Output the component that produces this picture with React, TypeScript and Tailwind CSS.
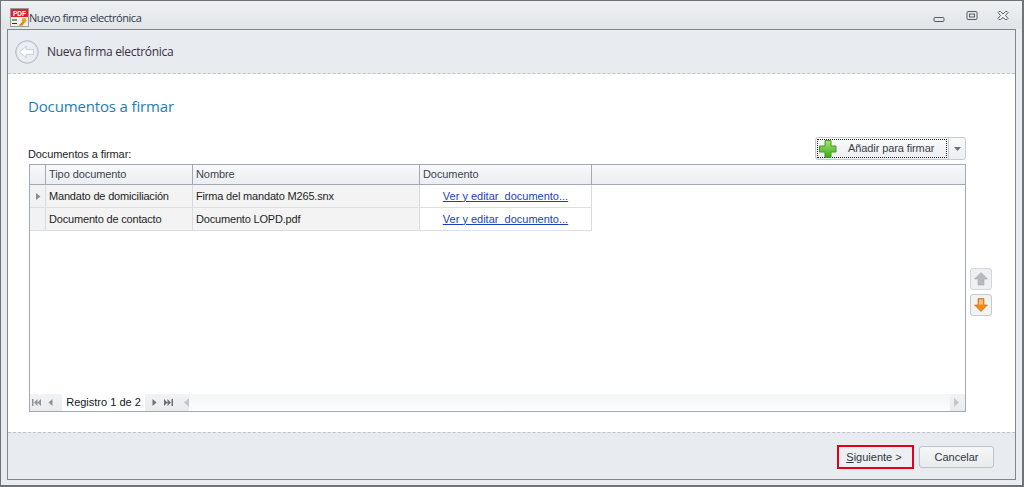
import React from "react";

const body = "font-['Liberation_Sans','Noto_Sans',sans-serif]";

function Cell({ w, children, className = "" }: { w: string; children?: React.ReactNode; className?: string }) {
  return <div className={`${w} shrink-0 h-full border-r border-[#d9dbdf] flex items-center truncate ${className}`}>{children}</div>;
}

function Row({ first, tipo, nombre }: { first?: boolean; tipo: string; nombre: string }) {
  return (
    <div className="flex h-[23px] w-[562px] border-b border-[#dcdee2] text-[11px] text-[#1e1e1e] tracking-[-0.18px]">
      <Cell w="w-[16px]" className="bg-[#f1f2f4] justify-center border-[#c4c7cd]">
        {first && <svg width="5" height="7" viewBox="0 0 5 7" className="ml-[1px]"><path d="M0 0l4.5 3.5L0 7z" fill="#8a8f96" /></svg>}
      </Cell>
      <Cell w="w-[147px]" className="bg-[#f3f3f4] pl-[3px]">{tipo}</Cell>
      <Cell w="w-[227px]" className="bg-[#f3f3f4] pl-[3px]">{nombre}</Cell>
      <Cell w="w-[172px]" className="bg-white justify-center">
        <span className="text-[#1b3fb8] underline tracking-normal">Ver y editar&nbsp; documento...</span>
      </Cell>
    </div>
  );
}

function HeadCell({ w, children }: { w: string; children?: React.ReactNode }) {
  return <div className={`${w} shrink-0 h-full border-r border-[#a3a9b5] flex items-center pl-[3px]`}>{children}</div>;
}

function NavIcon({ d, color = "#8e939a" }: { d: string; color?: string }) {
  return <svg width="9" height="9" viewBox="0 0 9 9"><path d={d} fill={color} /></svg>;
}

export default function App() {
  return (
    <div className={`w-[1024px] h-[487px] overflow-hidden flex flex-col border-[1px] border-[#6f7479] border-b-[2px] border-r-[2px] bg-[#e9ecf0] ${body}`}>
      {/* title bar */}
      <div className="h-[28px] shrink-0 flex items-center bg-gradient-to-b from-[#eef0f2] to-[#e2e5e8] pl-[9px] pr-[13px] pt-[6px]">
        <svg width="20" height="20" viewBox="0 0 20 20" className="shrink-0 mt-[-1px]">
          <rect x="0.5" y="0.5" width="18" height="18" fill="#f4f1ea" stroke="#9a9a9a" />
          <rect x="1" y="1" width="17" height="8" fill="#d6262b" />
          <text x="9.500" y="7.600" textAnchor="middle" fontSize="6.500" fontWeight="700" fill="#ffffff" fontFamily="Liberation Sans, sans-serif">PDF</text>
          <rect x="2" y="11.5" width="5" height="1" fill="#333" /><rect x="2" y="15" width="5" height="1" fill="#333" />
          <circle cx="14" cy="12.5" r="2.4" fill="#e6a41d" /><path d="M13 13.5l-4 3.5 1 1 1-.8 1 .8 2.5-3.2z" fill="#d48a12" />
        </svg>
        <span className="ml-[-1px] text-[11px] text-[#2d3a4a] font-['Open_Sans','Noto_Sans',sans-serif] tracking-[-0.45px]">Nuevo firma electrónica</span>
        <div className="ml-auto flex items-start gap-[19px] mt-[-2px]">
          <svg width="12" height="12" viewBox="0 0 12 12" className="mt-[3px] mr-[2px]"><rect x="1" y="4.5" width="10" height="4" rx="1" fill="none" stroke="#555c64" /></svg>
          <svg width="12" height="10" viewBox="0 0 12 10" className="mt-[1px]"><rect x="1" y="0.5" width="10" height="8" rx="1" fill="none" stroke="#555c64" /><rect x="3.5" y="3" width="5" height="3" fill="none" stroke="#555c64" /></svg>
          <svg width="12" height="10" viewBox="0 0 12 10" className="mt-[1px]"><path d="M1 1.5l1-1h1.5L6 3l2.5-2.5H10l1 1L8.5 4.500 11 7.500l-1 1H8.500L6 6.500 3.500 8.500H2l-1-1 2.500-3z" fill="#f4f5f6" stroke="#555c64" /></svg>
        </div>
      </div>

      {/* inner panel */}
      <div className="mx-[6px] flex-1 min-h-0 flex flex-col border border-[#82878d] border-b-[#82878d]">
        <div className="h-[44px] shrink-0 flex items-center pl-[7px] border-b border-dashed border-[#c0c4ca] bg-[#e8ebef]">
          <svg width="24" height="24" viewBox="0 0 24 24">
            <circle cx="12" cy="12" r="11.300" fill="#dfe3e9" stroke="#b4bbc5" />
            <circle cx="12" cy="12" r="9" fill="#e9ecf1" stroke="#f2f4f6" />
            <path d="M4.500 12l6.500-5.500v3.200h7.500v4.600H11v3.200z" fill="#ffffff" stroke="#bcc3cc" strokeWidth="0.8" />
          </svg>
          <span className="ml-[8px] text-[12px] text-[#3a3040] font-['Open_Sans','Noto_Sans',sans-serif] tracking-[-0.3px]">Nueva firma electrónica</span>
        </div>

        <div className="h-[358px] shrink-0 bg-white flex flex-col pt-[21px] pl-[21px]">
          <div className="h-[22px] ml-[-1px] flex items-center text-[15px] text-[#1c7dbb] font-['Open_Sans','Noto_Sans',sans-serif] leading-none tracking-[-0.15px]">Documentos a firmar</div>
          <div className="mt-[20px] flex items-end w-[937px] h-[27px]">
            <span className="ml-[-1px] text-[11px] text-[#1e1e1e] leading-none mb-[4px] tracking-[-0.1px]">Documentos a firmar:</span>
            <div className="ml-auto flex h-[23px] w-[151px] mb-[4px] rounded-[3px] border border-[#c6c9ce] bg-gradient-to-b from-[#fafafb] to-[#eceef1]">
              <div className="flex-1 relative m-[1px] border border-dotted border-[#222] flex items-center">
                <svg width="18" height="18" viewBox="0 0 18 18" className="ml-[1px] shrink-0">
                  <defs>
                    <linearGradient id="plus" x1="0" y1="0" x2="0" y2="1"><stop offset="0" stopColor="#a8e66a" /><stop offset="1" stopColor="#3aa81e" /></linearGradient>
                  </defs>
                  <path d="M6 .5h5.500a.5.500 0 0 1 .5.500V6h5v6h-5v5.500H6V12H.5V6H6z" fill="url(#plus)" stroke="#3f9a22" />
                </svg>
                <span className="ml-[11px] text-[11px] text-[#3a3f46] tracking-[-0.1px]">Añadir para firmar</span>
              </div>
              <div className="w-[17px] shrink-0 border-l border-[#c6c9ce] flex items-center justify-center">
                <svg width="7" height="4" viewBox="0 0 7 4"><path d="M0 0h7L3.500 4z" fill="#6d7278" /></svg>
              </div>
            </div>
          </div>
          <div className="flex">
            <div className="w-[937px] h-[248px] border border-[#a3a9b5] flex flex-col">
              <div className="h-[20px] shrink-0 flex border-b border-[#a3a9b5] bg-gradient-to-b from-[#f7f8fa] to-[#eceef2] text-[11px] text-[#3d4450] tracking-[-0.08px]">
                <HeadCell w="w-[16px]" />
                <HeadCell w="w-[147px]">Tipo documento</HeadCell>
                <HeadCell w="w-[227px]">Nombre</HeadCell>
                <HeadCell w="w-[172px]">Documento</HeadCell>
              </div>
              <Row first tipo="Mandato de domiciliación" nombre="Firma del mandato M265.snx" />
              <Row tipo="Documento de contacto" nombre="Documento LOPD.pdf" />
              <div className="flex-1" />
              <div className="h-[17px] shrink-0 flex items-center bg-gradient-to-b from-[#f1f3f5] to-[#e9ebee]">
                <div className="flex items-center gap-[5px] pl-[2px] w-[32px]">
                  <NavIcon d="M0 1h1.500v7H0zM5.500 1v7L2 4.500zM9 1v7L5.500 4.500z" />
                  <NavIcon d="M6.500 1v7L2.500 4.500z" />
                </div>
                <div className="h-full w-[83px] bg-white flex items-center justify-center text-[11px] text-[#111827]">Registro 1 de 2</div>
                <div className="flex items-center gap-[5px] pl-[5px] w-[35px]">
                  <NavIcon d="M2.500 1v7l4-3.500z" color="#6d7278" />
                  <NavIcon d="M0 1v7l3.500-3.500zM3.500 1v7L7 4.500zM7.500 1H9v7H7.500z" color="#6d7278" />
                </div>
                <svg width="5" height="9" viewBox="0 0 5 9" className="ml-[4px]"><path d="M5 0v9L0 4.500z" fill="#c3c7cc" /></svg>
                <div className="flex-1 h-full bg-gradient-to-b from-[#f4f5f7] to-[#fcfcfd]" />
                <svg width="5" height="9" viewBox="0 0 5 9" className="mr-[6px] ml-[4px]"><path d="M0 0v9l5-4.500z" fill="#c3c7cc" /></svg>
              </div>
            </div>
            <div className="ml-[4px] mt-[104px] flex flex-col gap-[4px]">
              <div className="w-[22px] h-[22px] rounded-[3px] border border-[#d2d5d9] bg-[#eff0f2] flex items-center justify-center">
                <svg width="14" height="14" viewBox="0 0 14 14"><path d="M7 .5L13.500 7H10v6H4V7H.5z" fill="#b7babd" stroke="#a8abae" strokeWidth="0.6" /></svg>
              </div>
              <div className="w-[22px] h-[22px] rounded-[3px] border border-[#c6c9ce] bg-[#f1f2f4] flex items-center justify-center">
                <svg width="14" height="14" viewBox="0 0 14 14">
                  <path d="M4 .5h6V7h3.500L7 13.500.5 7H4z" fill="#f08a16" stroke="#c96a0a" strokeWidth="0.6" />
                  <rect x="5" y="1.500" width="4" height="5" fill="#f9bf84" />
                </svg>
              </div>
            </div>
          </div>
        </div>

        <div className="flex-1 min-h-0 border-t border-dashed border-[#bfc3c9] bg-[#e8ebef] flex items-start justify-end pt-[12px] pr-[21px] gap-[5px] text-[11px] text-[#2f3740]">
          <div className="w-[77px] h-[24px] border-2 border-[#e2001a] bg-[#edeff2] flex items-center justify-center pr-[3px]">
            <span><span className="underline">S</span>iguiente &gt;</span>
          </div>
          <div className="w-[75px] h-[22px] mt-[1px] rounded-[3px] border border-[#c0c4c9] bg-gradient-to-b from-[#f5f6f7] to-[#e9ebee] flex items-center justify-center">Cancelar</div>
        </div>
      </div>
      <div className="h-[5px] shrink-0" />
    </div>
  );
}
